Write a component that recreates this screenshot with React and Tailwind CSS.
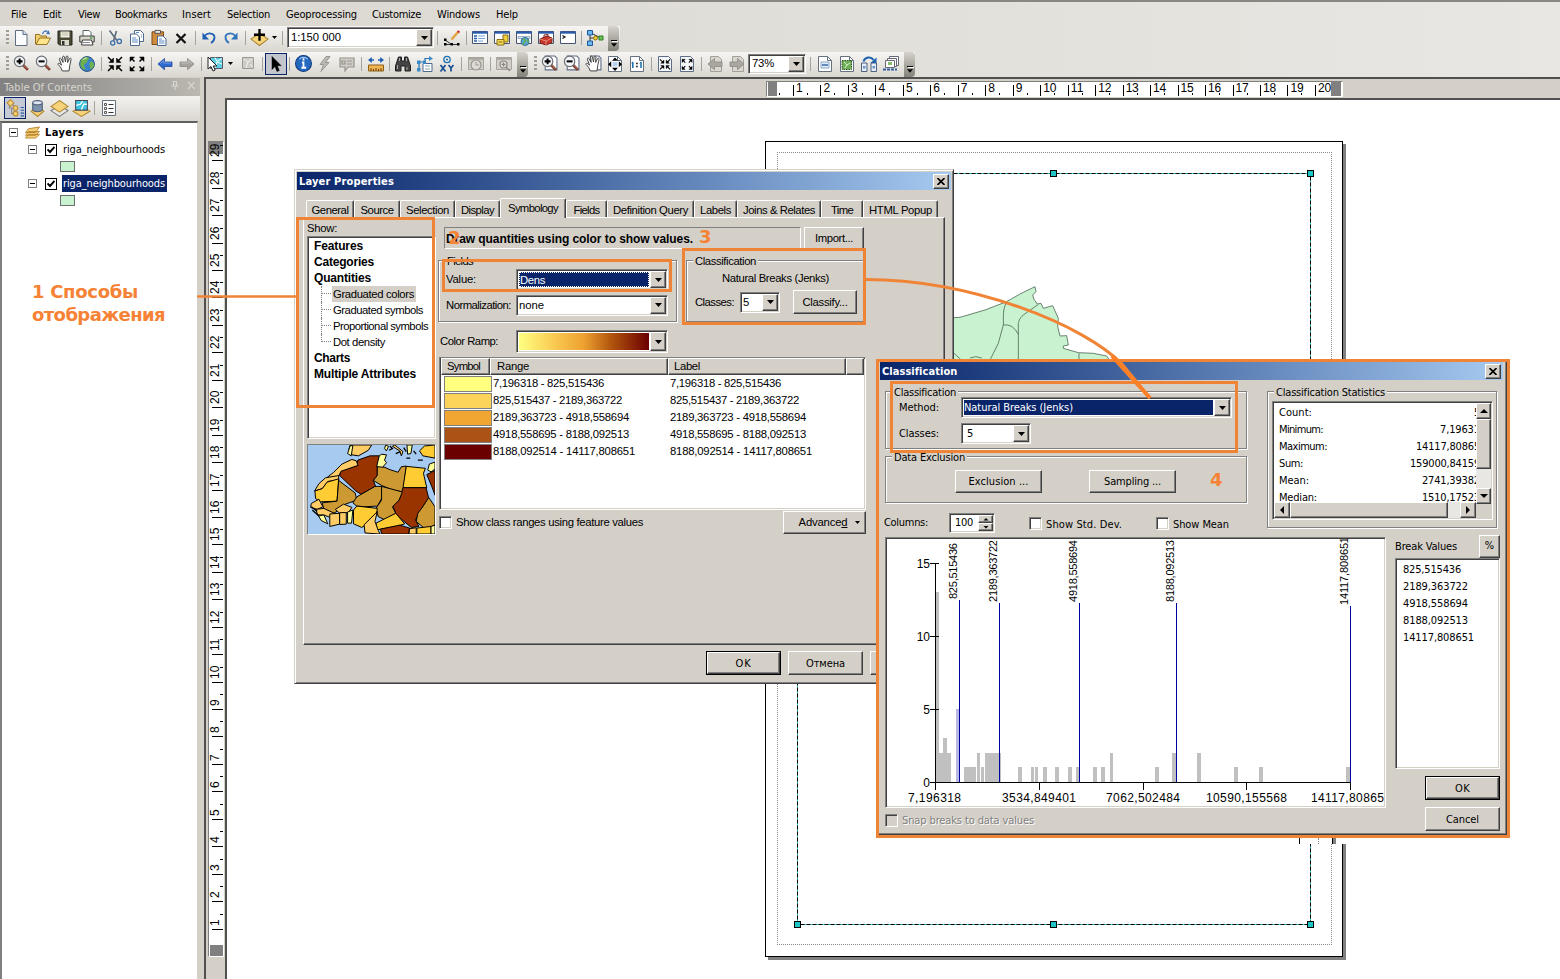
import React, { useLayoutEffect, useRef, useState } from "react";

const TAHOMA = "font-['DejaVu_Sans_Condensed','DejaVu_Sans',sans-serif] text-[11px] [&_span]:pt-[2px]";
const SANS = "font-['Liberation_Sans',sans-serif] text-[12px]";
const SANS11 = "font-['Liberation_Sans',sans-serif] text-[11.300px]";
const RAISED = "border border-t-white border-l-white border-r-[#404040] border-b-[#404040] shadow-[inset_-1px_-1px_0_#808080] bg-[#d4d0c8]";
const EDGE = "border border-t-[#808080] border-l-[#808080] border-r-white border-b-white shadow-[inset_1px_1px_0_#404040,inset_-1px_-1px_0_#d4d0c8]";
const SUNKEN = EDGE + " bg-white";

/* Text whose tracking is adjusted so that it fills a given width. */
function Fit({ w, children, className = "" }) {
  const ref = useRef(null);
  const [ls, setLs] = useState(0);
  useLayoutEffect(() => {
    const n = ref.current.textContent.length;
    const cur = ref.current.getBoundingClientRect().width;
    if (w && n > 1) setLs((w - cur) / n);
  }, [w]);
  return (
    <span ref={ref} className={"inline-block whitespace-pre shrink-0 " + className} style={{ letterSpacing: ls + "px" }}>
      {children}
    </span>
  );
}

const V = ({ children, className = "w-4 h-4" }) => (
  <svg viewBox="0 0 16 16" className={"shrink-0 overflow-visible " + className} fill="none">{children}</svg>
);

const Lens = ({ plus, page }) => (
  <V className="w-[17px] h-[17px]">
    {page && <path d="M4 1h9l2 2v11H4z" fill="#fff" stroke="#5c6b86" />}
    <path d="M9.500 9.500l4.500 4.500" stroke="#7a3b2a" strokeWidth="2.600" />
    <path d="M9.500 9l4 4" stroke="#c98b76" strokeWidth=".8" />
    <circle cx="6.200" cy="6" r="4.900" fill="#f3f5f8" stroke="#6c7076" strokeWidth="1.100" />
    <path d={plus ? "M3.400 6h5.600M6.200 3.200v5.600" : "M3.400 6h5.600"} stroke="#000" strokeWidth="1.900" />
  </V>
);
const Hand = ({ page }) => (
  <V className="w-[17px] h-[17px]">
    {page && <path d="M5 1h8l2 2v11H5z" fill="#fff" stroke="#5c6b86" />}
    <path d="M5 15L3.4 11.6 1 8.8c-.3-1 .8-1.5 1.6-.7L4.3 9.6 2.2 4c-.2-1 1-1.5 1.6-.5L5.8 7 5.3 2c0-1.1 1.4-1.3 1.7-.2L8 6.6 8.7 1.6c.2-1 1.6-.9 1.6.2L10 7l1.8-3.6c.5-.9 1.7-.4 1.5.6L12 10l-.7 5z" fill="#fff" stroke="#3d3d3d" strokeWidth=".9" />
  </V>
);
const Four = ({ out, page }) => (
  <V>
    {page && <path d="M1.500 .5h10l3 3v12h-13z" fill="#f4f6fa" stroke="#5c6b86" />}
    <g transform={page ? "translate(2.3 2.6) scale(.72)" : ""} stroke="#000" strokeWidth="1.500" fill="#000">
      {[0, 90, 180, 270].map((r) => (
        <g key={r} transform={"rotate(" + r + " 8 8)"}>
          {out ? <><path d="M1.500 1.500l4 4" /><path d="M1 1h4.500L1 5.500z" strokeWidth=".5" /></> : <><path d="M1 1l4.500 4.500" /><path d="M6.500 6.500h-4.500l4.500-4.500z" strokeWidth=".5" /></>}
        </g>
      ))}
    </g>
  </V>
);
const Arrow = ({ right, c = "#2e6bd0", s = "#1c4798", page }) => (
  <V>
    {page && <path d="M3.500 .5h8l3 3v12h-11z" fill="#dad7d0" stroke="#a3a09a" />}
    <g transform={right ? "translate(16 0) scale(-1 1)" : ""}>
      <path d="M1 8l6.500-5.500V6H15v4.500H7.500v3.200z" fill={c} stroke={s} strokeWidth=".8" />
      {!page && <path d="M3 7.700l3.800-3V7H14" stroke="#fff" strokeOpacity=".5" strokeWidth=".7" />}
    </g>
  </V>
);
const Win = ({ children, c = "#2a5cae", b = "#fff" }) => (
  <V>
    <path d="M.5 1.500h15v12H.5z" fill={b} stroke={c === "#2a5cae" ? "#44536e" : c} />
    <path d="M.5 1.500h15v2.200H.5z" fill={c} />
    {children}
  </V>
);
const Page = ({ children, s = "#66707f", f = "#fff" }) => (
  <V>
    <path d="M1.500 .5h9l4 4v11h-13z" fill={f} stroke={s} />
    <path d="M10.500 .5v4h4" stroke={s} />
    {children}
  </V>
);

const ICONS = {
  doc: <V><path d="M2.500 .5h7.500l4 4v11h-11.500z" fill="#fbfcfe" stroke="#5f6d80" /><path d="M10 .5v4h4" fill="#cfdcf0" stroke="#5f6d80" /></V>,
  open: <V><path d="M.5 14V4.500h4l1 1.500h6v3" fill="#f1cf6d" stroke="#957320" /><path d="M1 14.500L4.500 8h11L12 14.500z" fill="#ffe48d" stroke="#957320" /><path d="M7.500 4c1-3 3-3.500 5-2.500" stroke="#3c70b4" strokeWidth="1.300" /><path d="M11 4l4 .2L13.500 .2z" fill="#3c70b4" /></V>,
  save: <V><path d="M1 1h14v14H2.500L1 13.500z" fill="#4a4a32" stroke="#22221a" /><path d="M3.500 1.500h9v6h-9z" fill="#f4f3ea" /><path d="M4 10h8v5H4z" fill="#dcdccc" /><path d="M5 11h2.500v4H5z" fill="#33332a" /><path d="M4.500 3h7M4.500 5h7" stroke="#b8b89a" /></V>,
  print: <V><path d="M4 6V.5h6l2 2V6" fill="#fff" stroke="#566" /><path d="M.8 6h14.400v6H.8z" fill="#d8d6ca" stroke="#3c3c3c" /><path d="M3.500 10h9l1.500 5H2.500z" fill="#fff" stroke="#3c3c3c" /><path d="M4 12.500h7" stroke="#888" /><path d="M11 8h2.500" stroke="#3aa040" strokeWidth="1.400" /></V>,
  cut: <V><path d="M2.500 .5l7.500 10M9.500 1L6.500 11" stroke="#5c6b7c" strokeWidth="1.600" /><circle cx="5.700" cy="13" r="2.100" stroke="#3b6ea8" strokeWidth="1.300" /><circle cx="12.300" cy="11.300" r="2.200" stroke="#3b6ea8" strokeWidth="1.300" /></V>,
  copy: <V><path d="M5.500 .5h6l3 3v8h-9z" fill="#fff" stroke="#4c688e" /><path d="M1.500 4h6l3 3v8.500h-9z" fill="#fff" stroke="#4c688e" /><path d="M3 8h4M3 10h6M3 12h6M12 5h1M12 7h1M7 2.500h3" stroke="#5e8cc6" /></V>,
  paste: <V><path d="M1 1.800h11.500v12.700H1z" fill="#cf8c3d" stroke="#7c4b17" /><path d="M4 .4h5.500v3H4z" fill="#e6e6e6" stroke="#555" /><path d="M6.500 6h5.500l3 3v6.500H6.500z" fill="#fff" stroke="#4c688e" /><path d="M8 9h3M8 11h5.500M8 13h5.500" stroke="#5e8cc6" /></V>,
  del: <V><path d="M3.500 4L12.500 13M12.500 4L3.500 13" stroke="#111" strokeWidth="2.200" /></V>,
  undo: <V><path d="M3.500 6c3.500-4 10-3 10 1.200 0 2.500-1.500 4.500-3.500 5.800" stroke="#1f5fb0" strokeWidth="1.800" /><path d="M1.500 2.500v7H8z" fill="#1f5fb0" /></V>,
  redo: <V><g transform="translate(16 0) scale(-1 1)"><path d="M3.500 6c3.500-4 10-3 10 1.200 0 2.500-1.500 4.500-3.500 5.800" stroke="#2f74b8" strokeWidth="1.800" /><path d="M1.500 2.500v7H8z" fill="#2f74b8" /></g></V>,
  add: <V className="w-[17px] h-[17px]"><path d="M8 4l8 5.500-8 6-8-6z" fill="#f6d578" stroke="#a78436" /><path d="M8 0v11M2.800 5.400h10.400" stroke="#000" strokeWidth="2.200" /></V>,
  edit: <V><path d="M1 10l6 4M1 14.500h13M8 9L15 1" stroke="#333" strokeWidth="1" /><path d="M7.500 9.500L14.500 1.500" stroke="#e4a445" strokeWidth="2.600" /><path d="M13.500 1l2 1.500" stroke="#c33" strokeWidth="2" /><path d="M0 8.500h2.500V11H0zM0 13h2.500v2.500H0zM6.500 13H9v2.500H6.500zM13 13h2.500v2.500H13z" fill="#000" /></V>,
  toc: <Win><path d="M2 6h3M2 8.500h3M2 11h3" stroke="#1f5fb0" strokeWidth="1.300" /><path d="M6 6h7M6 8.500h7M6 11h5" stroke="#7ba4dc" strokeWidth="1.200" /></Win>,
  catalog: <Win><path d="M9 5h5v7H9z" fill="#f0d03c" stroke="#8a6d10" /><path d="M3 9.500h7V15H3z" fill="#f4dc5a" stroke="#8a6d10" /><path d="M4.500 12h4" stroke="#8a6d10" /></Win>,
  search: <Win><path d="M2 6.500h12v2H2z" fill="#dfe7f3" stroke="#7d8fae" strokeWidth=".7" /><circle cx="9" cy="11.500" r="4" fill="#56a5d8" stroke="#2f6f90" /><path d="M7 9.500c2-1 3 1 2 2s-2 2-2 3M11 10l1.500 2" stroke="#69b04a" strokeWidth="1.500" /></Win>,
  toolbox: <Win><path d="M2 9l7-3 5 2v4.500L8 15l-6-2z" fill="#c8392c" stroke="#7e1e16" /><path d="M2 9l6 2 6-3M8 11v4" stroke="#f0a090" strokeWidth=".8" /><path d="M6 7V5l4-.5V7" stroke="#7e1e16" /></Win>,
  python: <Win><path d="M2.500 5.500L5 7 2.500 8.500" stroke="#111" strokeWidth="1.200" /></Win>,
  model: <V><path d="M3 3v10M3 8h6M4 3l8 4" stroke="#333" /><path d="M.5 .5h5v4.500h-5z" fill="#6db6f0" stroke="#1c5a9c" /><path d="M.5 11h5v4.500h-5z" fill="#6db6f0" stroke="#1c5a9c" /><circle cx="8.500" cy="8" r="2" fill="#f2d12f" stroke="#8a7010" /><path d="M12 6h4v4h-4z" fill="#70c35a" stroke="#2a7a20" /></V>,
  zin: <Lens plus />, zout: <Lens />, hand: <Hand />,
  globe: <V><circle cx="8" cy="8" r="7.400" fill="#3b83cb" stroke="#27507e" /><path d="M3 3c3-3 6-2 7-1 0 2-2 2-2 4s-3 1-3 3 2 3 1 5C1 12 0 7 3 3zM11 6c3-1 4 1 4 3s-2 4-3 4-2-5-1-7z" fill="#6fb04e" /><path d="M4 4c1-1.500 3-2 4-2" stroke="#fff" strokeOpacity=".7" /></V>,
  inn: <Four />, out: <Four out />, back: <Arrow />, fwd: <Arrow right c="#a5a29c" s="#8b8882" />,
  sel: <V><path d="M3.500 1.500h12v11h-12z" fill="#5fd0e4" stroke="#556" /><path d="M8 1.500l2 4 5-3M15 8l-5-2-2 6" stroke="#fff" /><path d="M1 1v12l3-2.500L6 15l2.200-1L6.200 10H10z" fill="#fff" stroke="#222" /></V>,
  clear: <V><path d="M2.500 1.500h11v11h-11z" fill="#cfccc5" stroke="#9d9a94" /><path d="M4 3l4 3 4-3M8 6l-2 6M10 8l3 3" stroke="#f3f2ef" /></V>,
  ptr: <V><path d="M4 .5v13l3-3 2 5 2.300-1L9.200 9.700h4z" fill="#000" stroke="#000" strokeWidth=".5" /></V>,
  info: <V className="w-[17px] h-[17px]"><circle cx="8" cy="8" r="7.500" fill="#2568c0" stroke="#123c78" /><path d="M4 4c2-2.500 6-2.500 8 0" stroke="#a8c8f0" /><path d="M8 3v2.200M6.500 7H8v5M6 12h4.500" stroke="#fff" strokeWidth="1.700" /></V>,
  bolt: <V><path d="M9 .5L3 8.500h3.500L4 15.500l8-9H8.500l4.500-6z" fill="#bdbab4" stroke="#9a9791" /></V>,
  html: <V><path d="M1 2h14v9H9l-3 4v-4H1z" fill="#d0cdc6" stroke="#96938d" strokeWidth="1.200" /><path d="M3 5h3v3H3zM8 5h5M8 8h5" stroke="#96938d" strokeWidth="1.200" /></V>,
  measure: <V><path d="M.5 9h15v6H.5z" fill="#f0b552" stroke="#8f5f17" /><path d="M3 12v3M5.500 13v2M8 12v3M10.500 13v2M13 12v3" stroke="#6a4308" /><path d="M1 4h5M10 4h5" stroke="#1f5fb0" strokeWidth="1.500" /><path d="M3.800 1v6L0 4zM12.200 1v6L16 4z" fill="#1f5fb0" /></V>,
  find: <V><path d="M3.500 1h3v4H9.500V1h3l3 9v5H10v-5H6v5H.5v-5z" fill="#444" stroke="#1e1e1e" /><path d="M4.500 2v3M2.500 9v4M11.500 2v3M12 11v3" stroke="#aaa" /></V>,
  route: <V><path d="M6 7.500h9v8H6z" fill="#fff" stroke="#4c688e" /><path d="M8 10h5M8 13h5" stroke="#8aa" /><path d="M2 14V6h6V2.500h5" stroke="#1f73b4" strokeWidth="1.200" /><path d="M12 0l4 2.500-4 2.500zM0 4.500h3.500V8H0zM0 12h3.500v3.500H0zM6 4.500h3V8H6z" fill="#3a8ac8" /></V>,
  xy: <V><circle cx="8" cy="3.500" r="3.200" stroke="#1f73b4" strokeWidth="1.300" /><circle cx="8" cy="3.500" r="1.100" fill="#1f73b4" /><path d="M1.500 9l5 6.500M6.500 9l-5 6.500M9.500 9l2.500 3 2.500-3M12 12v3.500" stroke="#174f92" strokeWidth="1.700" /></V>,
  time: <Win c="#a8a59f" b="#d2cfc8"><circle cx="8" cy="9" r="5" fill="#dddad4" stroke="#9a9791" strokeWidth="1.200" /><path d="M8 6v3h3" stroke="#9a9791" /></Win>,
  viewer: <Win c="#a8a59f" b="#d2cfc8"><circle cx="7.500" cy="8.500" r="3.500" fill="#e4e2dd" stroke="#8a8781" strokeWidth="1.200" /><path d="M5.500 8.500h4M7.500 6.500v4M10 11l4 4" stroke="#8a8781" strokeWidth="1.300" /></Win>,
  pzin: <Lens plus page />, pzout: <Lens page />, phand: <Hand page />,
  pfull: <Page><path d="M8 1.500l3 3.200H5zM8 15l3-3.200H5zM1 8.300l3.200-3v6zM15 8.300l-3.200-3v6z" fill="#000" /><path d="M5.500 6h5v4.500h-5z" fill="#b9d3ef" /></Page>,
  p11: <Page><path d="M3.800 6v6M12 6v6" stroke="#1f73b4" strokeWidth="1.600" /><path d="M2.500 7.200L3.800 6M10.700 7.200L12 6" stroke="#1f73b4" /><path d="M7.200 7.500h1.500M7.200 10.500h1.500" stroke="#000" strokeWidth="1.500" /></Page>,
  pin: <Four page />, pout: <Four page out />,
  pback: <Arrow page c="#aaa7a1" s="#8b8882" />, pfwd: <Arrow page right c="#aaa7a1" s="#8b8882" />,
  draft: <Page><path d="M4 6h8v6H4z" fill="#e0ebf8" stroke="#8aa6cc" /><path d="M5 9h6" stroke="#2f5f9f" strokeWidth="1.400" /></Page>,
  focus: <Page><path d="M3 4.500h9.500v9H3z" fill="#6eb057" stroke="#2d4d22" strokeDasharray="1.500 1" /><path d="M5 6l3 3 3-2M6 12l2-3" stroke="#d7efc8" /></Page>,
  change: <V><path d="M.5 7h5.500v8.500H.5zM10 7h5.500v8.500H10z" fill="#e7eef8" stroke="#4c5f7e" /><path d="M2 10h2.500v2.500H2zM11.500 10H14v2.500h-2.500z" fill="#6b93c4" /><path d="M2.500 5.500C4 1 10 0 12.500 4" stroke="#1f62ac" strokeWidth="2" /><path d="M15.500 1.500v5.500H9.500z" fill="#1f62ac" /></V>,
  ddp: <V><path d="M6.500 .5h9v9h-9z" fill="#fff" stroke="#667" /><path d="M4.500 2.500h9v8h-9z" fill="#fff" stroke="#667" /><path d="M2.500 4.500h9v7h-9z" fill="#fff" stroke="#667" /><path d="M5 6h4v3H5z" fill="#83bd6b" /><path d="M0 13.500h14" stroke="#2f5f9f" strokeWidth="2.200" strokeDasharray="3 1" /></V>,
  t1: <V className="w-[18px] h-[18px]"><path d="M3 4v4h5M5 4l3 3M5 8v5h3" stroke="#8d8a83" /><path d="M4 .5l3 3-3 3-3-3z" fill="#f6d27a" stroke="#b98d35" /><circle cx="8.500" cy="8" r="2" fill="#f6d27a" stroke="#b98d35" /><circle cx="8.500" cy="13" r="2" fill="#f6d27a" stroke="#b98d35" /><path d="M13 7.500h3M13 10h3M13 12.500h3M13 15h3" stroke="#2f5f9f" /></V>,
  t2: <V className="w-[17px] h-[17px]"><path d="M8 6l6 4.500-6 5-6-5z" fill="#f4cf74" stroke="#b28934" /><path d="M3.500 2.500v7c1.500 2 7.500 2 9 0v-7" fill="#7d93ad" stroke="#4f6076" /><ellipse cx="8" cy="2.500" rx="4.500" ry="1.900" fill="#dfe7f0" stroke="#4f6076" /></V>,
  t3: <V className="w-[17px] h-[17px]"><path d="M8 5l8 5-8 5.500L0 10z" fill="#e8e8e8" stroke="#777" /><path d="M8 .5l8 5.500-8 5.500L0 6z" fill="#f6d27a" stroke="#b28934" /></V>,
  t4: <V className="w-[17px] h-[17px]"><path d="M8 6l8 4.500-8 5-8-5z" fill="#f6d27a" stroke="#b28934" /><path d="M2.500 .5h11v9h-11z" fill="#3fc5e0" stroke="#445" /><path d="M3 5l4-1 2-3M8 9l2-5h3" stroke="#fff" strokeWidth="1.200" /></V>,
  t5: <V><path d="M1.500 .5h13v15h-13z" fill="#fbfbfb" stroke="#66707f" /><path d="M3.500 3.500h2v2h-2zM3.500 7.500h2v2h-2zM3.500 11.500h2v2h-2z" stroke="#333" strokeWidth=".8" /><path d="M7.500 4.500h5M7.500 8.500h5M7.500 12.500h5" stroke="#333" /></V>,
};

const Cell = ({ n, className = "w-[22px]" }) => <div className={"flex h-[22px] shrink-0 items-center justify-center " + className}>{ICONS[n]}</div>;
const Cells = ({ list }) => list.split(" ").map((n) => <Cell key={n} n={n} />);
const Sep = ({ className = "w-[6px]" }) => <div className={"flex shrink-0 items-center justify-center " + className}><div className="h-[14px] w-px bg-[#a6a39c]" /></div>;
const Grip = () => <div className="w-[3px] h-[16px] shrink-0 bg-[repeating-linear-gradient(180deg,#a09d97_0_2px,transparent_2px_4px)]" />;
const Down = ({ className = "h-[4px] w-[7px]" }) => <svg viewBox="0 0 7 4" className={"shrink-0 " + className}><path d="M0 0h7L3.500 4z" fill="#000" /></svg>;
const End = () => (
  <div className="-mb-[2px] ml-[2px] flex h-[25px] w-[11px] shrink-0 flex-col items-center justify-end self-start rounded-r-sm bg-linear-to-b from-[#d6d3cc] to-[#858279] pb-[4px]">
    <div className="mb-[2px] h-px w-[6px] bg-black shadow-[1px_1px_0_#fff]" />
    <Down className="h-[4px] w-[6px]" />
  </div>
);
const BAR = "flex h-[25px] items-center bg-linear-to-b from-[#f6f5f3] to-[#dad7d0] pb-[2px]";

function Combo({ children, className, inner = "", btn = "w-[16px]" }) {
  return (
    <div className={"flex shrink-0 p-px " + SUNKEN + " " + className}>
      <div className={"m-px flex min-w-0 flex-1 items-center overflow-hidden " + inner}>{children}</div>
      <div className={"flex shrink-0 items-center justify-center " + RAISED + " " + btn}><Down /></div>
    </div>
  );
}
const Button = ({ children, className = "" }) => <div className={"flex shrink-0 items-center justify-center " + RAISED + " " + className}>{children}</div>;
const OkButton = ({ children, className = "" }) => <div className={"flex shrink-0 border border-black " + className}><Button className="flex-1">{children}</Button></div>;
const Check = ({ className = "", fill = "bg-white" }) => <div className={"h-[13px] w-[13px] shrink-0 " + EDGE + " " + fill + " " + className} />;
const Close = ({ className = "" }) => (
  <Button className={"h-[15px] w-[16px] " + className}>
    <svg viewBox="0 0 8 7" className="h-[7px] w-[8px]"><path d="M.5 0l7 7M7.500 0l-7 7" stroke="#000" strokeWidth="1.600" /></svg>
  </Button>
);
function Group({ title, w, className = "", children }) {
  return (
    <div className={"relative shrink-0 border border-[#808080] shadow-[1px_1px_0_#fff,inset_1px_1px_0_#fff] " + className}>
      <div className="absolute left-[6px] top-[-7px] bg-[#d4d0c8] px-[2px] leading-[15px]"><Fit w={w} className="pt-0!">{title}</Fit></div>
      {children}
    </div>
  );
}

const MENU = [["File", 16, "w-[32px]"], ["Edit", 18, "w-[35px]"], ["View", 22, "w-[37px]"], ["Bookmarks", 52, "w-[67px]"], ["Insert", 29, "w-[45px]"], ["Selection", 43, "w-[59px]"], ["Geoprocessing", 71, "w-[86px]"], ["Customize", 49, "w-[65px]"], ["Windows", 43, "w-[59px]"], ["Help", 22, "w-[30px]"]];

function TopBars() {
  return (
    <div className="h-[77px] shrink-0 border-t-2 border-[#8a8782] bg-linear-to-r from-[#d9d6cf] to-[#e9e7e3]">
      <div className={"flex h-[24px] items-center pl-[11px] " + TAHOMA}>
        {MENU.map(([t, w, c]) => <div key={t} className={c}><Fit w={w}>{t}</Fit></div>)}
      </div>
      <div className={BAR + " w-[620px] pl-[6px]"}>
        <Grip /><div className="w-px" />
        <Cells list="doc open save print" /><Sep /><Cells list="cut copy paste del" /><Sep /><Cells list="undo redo" /><Sep />
        <Cell n="add" /><div className="flex w-[8px] justify-center"><Down className="h-[3px] w-[5px]" /></div><Sep className="w-[9px]" />
        <Combo className={"h-[21px] w-[147px] " + SANS11} inner="pl-px"><Fit w={50}>1:150 000</Fit></Combo>
        <Sep className="w-[7px]" /><Cell n="edit" /><Sep /><Cells list="toc catalog search toolbox python" /><Sep className="w-[5px]" /><Cell n="model" /><End />
      </div>
      <div className="flex h-[26px] items-end">
        <div className={BAR + " w-[915px] pl-[6px]"}>
          <Grip /><div className="w-px" />
          <Cells list="zin zout hand globe" /><Sep /><Cells list="inn out" /><Sep /><Cells list="back fwd" /><Sep />
          <Cell n="sel" /><div className="flex w-[8px] justify-center"><Down className="h-[3px] w-[5px]" /></div><div className="w-[3px]" /><Cell n="clear" /><Sep />
          <Cell n="ptr" className="w-[22px] border border-[#0a246a] bg-[#c3c6cd]" /><Sep className="w-[5px]" />
          <Cells list="info bolt html" /><Sep className="w-[7px]" /><Cell n="measure" /><Sep className="w-[5px]" /><Cells list="find route xy" /><Sep className="w-[7px]" />
          <Cell n="time" /><Sep /><Cell n="viewer" /><End />
          <div className="w-[6px]" /><Grip /><div className="w-px" />
          <Cells list="pzin pzout phand pfull p11" /><Sep /><Cells list="pin pout" /><Sep /><Cells list="pback pfwd" />
          <Combo className={"h-[20px] w-[58px] " + SANS11} inner="pl-px"><Fit w={22}>73%</Fit></Combo>
          <Sep className="w-[8px]" /><Cells list="draft focus change ddp" /><End />
        </div>
      </div>
    </div>
  );
}

const Minus = () => <div className="flex h-[9px] w-[9px] shrink-0 items-center justify-center border border-[#808080] bg-white"><div className="h-px w-[5px] bg-black" /></div>;
function LayerRow({ selected }) {
  return (
    <>
      <div className="flex h-[17px] items-center pl-[26px]">
        <Minus />
        <div className="ml-[8px] flex h-[12px] w-[12px] items-center justify-center border border-black">
          <svg viewBox="0 0 8 8" className="h-2 w-2"><path d="M.5 3.500L3 6 7.500 1" stroke="#000" strokeWidth="1.900" fill="none" /></svg>
        </div>
        <div className={"ml-[5px] flex h-[17px] w-[105px] items-center pl-px " + (selected ? "bg-[#0a246a] text-white" : "")}><Fit w={102}>riga_neighbourhoods</Fit></div>
      </div>
      <div className="flex h-[17px] items-center pl-[58px] pb-px"><div className="h-[11px] w-[15px] border border-[#6e6e6e] bg-[#c8f2d0]" /></div>
    </>
  );
}

function Contents() {
  return (
    <div className={"flex w-[200px] shrink-0 flex-col " + TAHOMA}>
      <div className="flex h-[18px] items-center bg-linear-to-r from-[#818181] to-[#bbb8b1] pl-[4px] text-[#d8d5ce]">
        <Fit w={88}>Table Of Contents</Fit>
        <svg viewBox="0 0 24 9" className="mb-[3px] ml-[79px] h-[9px] w-[24px]"><path d="M2 .5h4M2.500 .5v4M5.500 .5v4M.5 5h7M4 5v4M17 1l6.500 7M23.500 1L17 8" stroke="#d8d5ce" fill="none" strokeWidth="1.200" /></svg>
      </div>
      <div className="flex h-[25px] items-center bg-linear-to-b from-[#f3f2ef] to-[#dad7d0] pl-[4px] pb-px">
        <Cell n="t1" className="w-[22px] border border-[#0a246a] bg-[#c5cad6]" /><Cells list="t2 t3 t4" /><Sep className="w-[5px]" /><Cell n="t5" className="w-[24px]" />
      </div>
      <div className="mr-[2px] flex-1 border-t-2 border-l-2 border-r border-t-[#606060] border-l-[#808080] border-r-[#d4d0c8] bg-white">
        <div className="flex h-[18px] items-center pl-[7px]">
          <Minus />
          <svg viewBox="0 0 17 14" className="ml-[6px] h-[13px] w-[17px]"><path d="M1 13l3-4h12l-4 4zM1 10l3-4h12l-4 4zM1 7l3-4 12-2-4 6z" fill="#f5cf7a" stroke="#b07b22" strokeWidth=".9" /></svg>
          <Fit w={39} className="ml-[4px] font-bold">Layers</Fit>
        </div>
        <LayerRow /><LayerRow selected />
      </div>
    </div>
  );
}

const range = (a, b) => Array.from({ length: b - a + 1 }, (_, i) => a + i);
function HRuler() {
  return (
    <div className={"ml-[560px] mt-[2px] flex h-[16px] w-[577px] overflow-hidden border border-t-[#808080] border-l-[#808080] border-r-white border-b-white bg-white " + SANS}>
      <div className="ml-px h-full w-[9px] shrink-0 bg-[#808080]" />
      <div className="mr-[13px] w-[3px] shrink-0 self-end"><div className="mb-px ml-[2px] h-[2px] w-px bg-black" /></div>
      {range(1, 20).map((n) => (
        <div key={n} className={"flex shrink-0 items-end " + (n === 20 ? "w-[16px]" : "w-[27.480px]")}>
          <div className="h-[11px] w-px shrink-0 bg-black" />
          <div className="w-[13px] shrink-0 self-start pl-[2px] leading-[13px]"><Fit w={n > 9 ? 13 : 7}>{n}</Fit></div>
          <div className={"mb-px h-[2px] w-px shrink-0 " + (n === 20 ? "" : "bg-black")} />
        </div>
      ))}
      <div className="h-full w-[10px] shrink-0 bg-[#808080]" />
    </div>
  );
}
function VRuler() {
  return (
    <div className={"mx-[2px] mt-[43px] flex h-[816px] w-[16px] flex-col-reverse overflow-hidden border border-t-[#808080] border-l-[#808080] border-r-white border-b-white bg-white " + SANS}>
      <div className="ml-px h-[11px] w-[14px] shrink-0 bg-[#808080]" />
      <div className="h-[15.500px] shrink-0" />
      {range(1, 29).map((n) => (
        <div key={n} className={"flex h-[27.450px] shrink-0 flex-col justify-end " + (n === 29 ? "bg-[linear-gradient(180deg,#808080_20px,transparent_20px)]" : "")}>
          <div className="-mb-px ml-[11px] h-px w-[3px] bg-black" />
          <div className="mb-[3px] flex h-[12px] w-[12px] rotate-180 items-start leading-[12px] [writing-mode:vertical-rl]"><span>{n}</span></div>
          <div className="ml-[3px] h-px w-[11px] bg-black" />
        </div>
      ))}
    </div>
  );
}

const Handle = ({ className }) => <div className={"absolute h-[7px] w-[7px] border border-black bg-[#1fc4c4] " + className} />;
function MapCanvas() {
  return (
    <div className="relative flex-1 overflow-hidden border-t-2 border-l-2 border-[#505050] bg-white">
      <div className="absolute left-[538px] top-[41px] h-[816px] w-[578px] border border-black bg-white shadow-[3px_3px_0_#808080]" />
      <div className="absolute left-[550px] top-[52px] h-[793px] w-[555px] border border-dotted border-[#8a8a8a]" />
      <svg viewBox="797 173 514 752" className="absolute left-[570px] top-[73px] h-[752px] w-[514px]" fill="none">
        <rect x="797.500" y="173.500" width="513" height="751" stroke="#3cc8c8" />
        <rect x="797.500" y="173.500" width="513" height="751" stroke="#000" strokeDasharray="4 2" />
        <g transform="translate(930 70) scale(.33333)" stroke="#55705c" strokeWidth="2.600">
          <path d="M-20 755L72 743 90 742 165 720 230 695 270 672 315 650 318 665 308 675 312 688 322 702 333 700 340 715 368 707 385 745 383 770 390 798 410 797 415 825 400 828 400 835 445 848 490 850 530 858 545 880 72 880z" fill="#c8f2d0" />
          <path d="M230 695C215 725 222 750 220 765L205 820 180 870M220 765Q248 760 265 793M325 703L280 735C268 745 265 755 265 765V868M447 850v18M72 850L92 868M120 864Q137 856 155 864" />
        </g>
      </svg>
      <Handle className="left-[823px] top-[70px]" /><Handle className="left-[1080px] top-[70px]" />
      <Handle className="left-[567px] top-[821px]" /><Handle className="left-[823px] top-[821px]" /><Handle className="left-[1080px] top-[821px]" />
      <div className="absolute left-[1040px] top-[738px] h-[6px] w-[90px] bg-white">
        <div className="flex h-full">
          <div className="ml-[32px] w-px bg-black" /><div className="ml-[18px] w-px border-l border-dotted border-[#8a8a8a]" /><div className="ml-[13px] w-px bg-black" /><div className="w-[3px] bg-[#808080]" />
        </div>
      </div>
    </div>
  );
}

const LAND = [
  ["#ffcc66", "185,162 176,145 180,132 245,132 235,148 205,165"], ["#ffff99", "172,158 180,134 188,134 183,165"],
  ["#993300", "203,178 240,165 268,165 262,200 262,225 250,240 257,258 213,282 197,272 148,225 150,210 200,195"],
  ["#ffff99", "268,165 275,160 290,162 284,178 290,186 276,202 260,198"],
  ["#ffcc66", "198,180 204,194 152,212 145,227 105,235 130,215 155,190 185,176"],
  ["#ffcc66", "105,232 145,225 145,238 112,243 95,265 72,272 85,250"],
  ["#ffcc33", "73,272 95,265 110,245 145,235 140,303 90,305 75,295"],
  ["#cc9933", "145,240 195,278 200,300 165,312 155,325 130,340 100,328 95,308 140,303"],
  ["#cc9933", "200,290 255,258 275,258 278,290 262,318 225,320 200,318 188,308"],
  ["#cc9933", "262,198 285,200 300,207 325,215 335,198 350,196 340,275 310,270 275,255 250,240 262,225"],
  ["#ffcc33", "350,197 408,203 402,218 412,262 340,262"],
  ["#993300", "340,262 410,262 418,295 400,320 378,360 388,380 365,383 320,345 308,315 328,300"],
  ["#cc9933", "275,258 338,275 328,300 308,320 318,340 285,360 265,350 258,325 275,300"],
  ["#ffcc33", "190,330 200,318 262,325 260,342 235,370 215,383 190,372"],
  ["#ffcc33", "258,370 318,340 345,372 320,380 262,390"],
  ["#ffcc66", "262,335 255,365 265,392 270,403 225,400 222,375"],
  ["#cc9933", "418,292 437,320 437,375 410,390 380,365 385,340 400,320"],
  ["#993300", "272,388 330,376 360,385 357,403 275,403"], ["#ffcc66", "360,387 380,384 380,403 358,403"],
  ["#ffcc33", "382,385 425,380 425,403 382,403"], ["#ffff99", "425,380 437,376 437,403 425,403"],
  ["#ffcc66", "62,310 85,297 97,320 80,328 60,322"], ["#ffcc66", "75,328 100,325 132,340 118,352 100,345 82,345"],
  ["#ffff99", "84,348 100,345 112,372 92,362"], ["#ffcc66", "118,342 148,340 148,373 118,380"],
  ["#ffcc66", "135,328 160,312 185,322 175,338 148,340"], ["#ffcc66", "148,338 168,338 168,373 148,374"], ["#ffff99", "172,336 188,330 184,370 172,370"],
  ["#ffcc33", "390,150 405,135 437,132 437,172 400,165"], ["#ffff99", "415,208 420,190 437,184 437,205 425,214"],
  ["#993300", "412,222 437,210 437,285 428,260"], ["#ffff99", "288,132 296,136 290,150 284,142"], ["#ffcc66", "315,132 340,152 335,165 330,150 308,136"], ["#ffff99", "352,132 368,132 364,158 354,160"],
];
const TABS = [["General", 37, "w-[48px]"], ["Source", 33, "w-[46px]"], ["Selection", 43, "w-[55px]"], ["Display", 33, "w-[45px]"], ["Symbology", 50, "w-[66px]"], ["Fields", 26, "w-[41px]"], ["Definition Query", 75, "w-[87px]"], ["Labels", 31, "w-[43px]"], ["Joins & Relates", 72, "w-[84px]"], ["Time", 22, "w-[42px]"], ["HTML Popup", 63, "w-[75px]"]];
const SHOW = [["Features", 49], ["Categories", 60], ["Quantities", 57], ["Graduated colors", 81, 1], ["Graduated symbols", 90, 1], ["Proportional symbols", 95, 1], ["Dot density", 52, 1], ["Charts", 36], ["Multiple Attributes", 102]];
const CLASSES = [["bg-[#ffff80]", "7,196318 - 825,515436", 111], ["bg-[#fcd45a]", "825,515437 - 2189,363722", 129], ["bg-[#f0a630]", "2189,363723 - 4918,558694", 136], ["bg-[#ab5316]", "4918,558695 - 8188,092513", 136], ["bg-[#6b0000]", "8188,092514 - 14117,808651", 142]];
const TITLE = "flex h-[18px] shrink-0 items-center justify-between bg-linear-to-r from-[#0a246a] to-[#a6caf0] pl-[2px] pr-[2px] font-bold text-white " + TAHOMA;

function LayerProperties() {
  return (
    <div className={"absolute left-[294px] top-[169px] flex h-[515px] w-[660px] flex-col border border-t-[#d4d0c8] border-l-[#d4d0c8] border-r-[#404040] border-b-[#404040] bg-[#d4d0c8] p-[2px] shadow-[inset_1px_1px_0_#fff,inset_-1px_-1px_0_#808080] " + SANS11}>
      <div className={TITLE}><Fit w={95}>Layer Properties</Fit><Close /></div>
      <div className="flex h-[27px] shrink-0 items-end pl-[9px]">
        {TABS.map(([t, w, c]) => {
          const on = t === "Symbology";
          return (
            <div key={t} className={"flex justify-center rounded-t-[2px] border border-b-0 border-t-white border-l-white border-r-[#404040] bg-[#d4d0c8] shadow-[inset_-1px_0_0_#808080] " + c + (on ? " relative z-10 -mb-px h-[20px] pt-[2px] leading-[14px]" : " h-[17px] pt-[2px] leading-[15px]")}>
              <Fit w={w}>{t}</Fit>
            </div>
          );
        })}
      </div>
      <div className="mx-[6px] flex h-[428px] w-[642px] shrink-0 border border-t-white border-l-white border-r-[#404040] border-b-[#404040] shadow-[inset_-1px_-1px_0_#808080]">
        <div className="flex w-[132px] shrink-0 flex-col pl-[3px]">
          <div className="flex h-[18px] items-center pt-[2px]"><Fit w={30}>Show:</Fit></div>
          <div className={"h-[203px] w-[129px] " + SUNKEN}>
            <div className="pt-px">
              {SHOW.map(([t, w, sub], i) => (
                <div key={t} className={"flex h-[16px] items-center " + (sub ? "pl-[13px]" : "pl-[5px] text-[12px] font-bold")}>
                  {sub && <div className={"mr-[2px] w-[9px] border-l border-dotted border-[#808080] " + (t === "Dot density" ? "mb-[8px] h-[8px]" : "h-[16px]")}><div className="h-[8px] w-[9px] border-b border-dotted border-[#808080]" /></div>}
                  <div className={"flex h-[16px] items-center px-px " + (i === 3 ? "bg-[#d4d0c8] pr-[2px]" : "")}><Fit w={w}>{t}</Fit></div>
                </div>
              ))}
            </div>
          </div>
          <svg viewBox="52 132 385 271" preserveAspectRatio="none" className="mt-[5px] h-[91px] w-[129px] border border-t-[#808080] border-l-[#808080] border-r-white border-b-white bg-[#a6caf0]">
            {LAND.map(([c, p]) => <polygon key={p} points={p} fill={c} stroke="#000" strokeWidth="3" />)}
            <path d="M300 135l8 8-10 5M318 158l14-6M350 172h12M385 178h15M62 320l18 14M65 330l20 18M342 140l8 12M372 150l8 10" stroke="#000" strokeWidth="4" fill="none" />
          </svg>
        </div>
        <div className="ml-[3px] flex w-[430px] flex-col pt-[9px]">
          <div className="flex h-[23px] pl-[5px]">
            <div className="flex h-[22px] w-[357px] items-center border border-t-[#808080] border-l-[#808080] border-r-white border-b-white pl-px pt-[2px] text-[12px] font-bold"><Fit w={247}>Draw quantities using color to show values.</Fit></div>
            <Button className="ml-[3px] h-[23px] w-[60px]"><Fit w={38}>Import...</Fit></Button>
          </div>
          <div className="-ml-px mt-[10px] flex">
            <Group title="Fields" w={26} className="h-[62px] w-[239px] pl-[7px] pt-[8px]">
              <div className="flex h-[21px] items-center"><div className="w-[70px]"><Fit w={30}>Value:</Fit></div>
                <Combo className="h-[21px] w-[152px]" inner="bg-[#0a246a] outline-1 -outline-offset-1 outline-dotted outline-white pl-px pt-px text-white"><Fit w={25}>Dens</Fit></Combo></div>
              <div className="mt-[4px] flex h-[22px] items-center"><div className="w-[70px]"><Fit w={65}>Normalization:</Fit></div>
                <Combo className="h-[21px] w-[152px]" inner="pt-px"><Fit w={25}>none</Fit></Combo></div>
            </Group>
            <Group title="Classification" w={61} className="ml-[9px] h-[62px] w-[179px] pl-[8px] pt-[9px]">
              <div className="flex h-[16px] items-center pl-[27px]"><Fit w={107}>Natural Breaks (Jenks)</Fit></div>
              <div className="mt-[4px] flex h-[24px] items-center"><div className="w-[45px]"><Fit w={39}>Classes:</Fit></div>
                <Combo className="h-[21px] w-[40px]" inner="">5</Combo>
                <Button className="ml-[13px] h-[24px] w-[64px]"><Fit w={45}>Classify...</Fit></Button></div>
            </Group>
          </div>
          <div className="mt-[8px] flex h-[23px] items-center pl-px"><div className="w-[76px]"><Fit w={58}>Color Ramp:</Fit></div>
            <Combo className="h-[23px] w-[152px]" inner="bg-[linear-gradient(90deg,#ffff80_0%,#f9c850_28%,#eda030_50%,#b4580f_70%,#6b0000_100%)]"><span /></Combo></div>
          <div className={"mt-[4px] flex h-[153px] w-[427px] flex-col px-px " + SUNKEN}>
            <div className="flex h-[17px] shrink-0">
              <div className={"w-[49px] pl-[5px] leading-[15px] " + RAISED}><Fit w={33}>Symbol</Fit></div>
              <div className={"w-[178px] pl-[6px] leading-[15px] " + RAISED}><Fit w={32}>Range</Fit></div>
              <div className={"w-[178px] pl-[5px] leading-[15px] " + RAISED}><Fit w={26}>Label</Fit></div>
              <div className={"flex-1 " + RAISED} />
            </div>
            {CLASSES.map(([c, t, w]) => (
              <div key={t} className="flex h-[17px] shrink-0 items-center pl-[3px]">
                <div className={"h-[16px] w-[48px] border border-[#808080] " + c} />
                <div className="w-[178px] pl-px"><Fit w={w}>{t}</Fit></div>
                <Fit w={w}>{t}</Fit>
              </div>
            ))}
          </div>
          <div className="mt-px flex h-[23px] items-center">
            <Check /><Fit w={187} className="ml-[4px]">Show class ranges using feature values</Fit>
            <Button className="ml-auto mr-[3px] h-[23px] w-[83px] pl-[10px]"><Fit w={49}>Advance<u>d</u></Fit><Down className="ml-[8px] h-[3px] w-[5px]" /></Button>
          </div>
        </div>
      </div>
      <div className={"flex pl-[409px] pt-[6px] " + TAHOMA}>
        <OkButton className="h-[24px] w-[75px]"><Fit w={16}>OK</Fit></OkButton>
        <Button className="ml-[7px] h-[24px] w-[75px]"><Fit w={39}>Отмена</Fit></Button>
        <Button className="ml-[7px] h-[24px] w-[75px]"><span /></Button>
      </div>
    </div>
  );
}

const BARS = [[935, 4, 13], [939, 4, 2], [943, 4, 3], [947, 4, 2], [956, 3, 5], [964, 12, 1], [977, 3, 2], [981, 3, 1], [985, 16, 2], [1018, 4, 1], [1031, 3, 1], [1035, 3, 1], [1043, 4, 1], [1055, 4, 1], [1068, 4, 1], [1076, 4, 1], [1093, 4, 1], [1101, 4, 1], [1110, 3, 2], [1155, 4, 1], [1172, 4, 2], [1197, 4, 2], [1234, 4, 1], [1259, 4, 1], [1346, 4, 1]];
const BREAKS = [[959, 600, "825,515436", 56, 599], [999, 603, "2189,363722", 62, 602], [1079, 603, "4918,558694", 62, 602], [1176, 603, "8188,092513", 62, 602], [1350, 606, "14117,808651", 68, 605]];
const XLAB = [[935, 908, "7,196318", 53], [1039, 1002, "3534,849401", 74], [1143, 1106, "7062,502484", 74], [1246, 1206, "10590,155568", 81], [1350, 1311, "14117,808651", 80]];

function Histogram() {
  return (
    <svg viewBox="887 539 497 267" className="block h-[267px] w-[497px] font-['Liberation_Sans',sans-serif]">
      {BARS.map(([x, w, v]) => <rect key={x} x={x} y={Math.round(782 - v * 14.6)} width={w} height={Math.round(v * 14.6)} fill={v === 5 ? "#b9b9e4" : "#c0c0c0"} />)}
      {BREAKS.map(([x, y, t, w, b]) => (
        <g key={x}>
          <rect x={x} y={y} width="1" height={782 - y} fill="#0000a0" />
          <text transform={`translate(${x - 2.5} ${b}) rotate(-90)`} fontSize="11" textLength={w} lengthAdjust="spacing">{t}</text>
        </g>
      ))}
      <path d="M935.500 563V782.500H1351" stroke="#000" fill="none" />
      {[15, 10, 5, 0].map((v) => (
        <g key={v}>
          <path d={`M930 ${Math.round(782 - v * 14.6) + 0.5}h9`} stroke="#000" />
          <text x="930" y={Math.round(782 - v * 14.6) + 5} fontSize="12" textAnchor="end">{v}</text>
        </g>
      ))}
      {XLAB.map(([x, l, t, w]) => (
        <g key={x}>
          <path d={`M${x + 0.5} 782v8`} stroke="#000" />
          <text x={l} y="802" fontSize="12" textLength={w} lengthAdjust="spacing">{t}</text>
        </g>
      ))}
    </svg>
  );
}

const STATS = [["Count:", 33, "58", 12, "ml-[162px]"], ["Minimum:", 44, "7,196318", 46, "ml-[117px]"], ["Maximum:", 48, "14117,80865", 64, "ml-[89px]"], ["Sum:", 24, "159000,84159", 70, "ml-[107px]"], ["Mean:", 30, "2741,393820", 64, "ml-[113px]"], ["Median:", 38, "1510,175231", 64, "ml-[105px]"]];
const Tri = ({ d }) => <svg viewBox="0 0 8 8" className="h-2 w-2 shrink-0"><path d={d} fill="#000" /></svg>;

function ClassificationDialog() {
  return (
    <div className={"absolute left-[876px] top-[359px] h-[479px] w-[634px] border-3 border-[#f08436] " + TAHOMA}>
      <div className="flex h-full flex-col border-r border-b border-[#404040] bg-[#d4d0c8] px-px shadow-[inset_-1px_-1px_0_#808080]">
        <div className={TITLE + " mr-[2px]"}><Fit w={75}>Classification</Fit><Close /></div>
        <div className="flex h-[152px] shrink-0">
          <div className="w-[363px] shrink-0 pl-[5px]">
            <Group title="Classification" w={62} className="mt-[11px] h-[58px] w-[362px] pl-[13px] pt-[5px]">
              <div className="flex h-[21px] items-center"><div className="w-[62px]"><Fit w={40}>Method:</Fit></div>
                <Combo className="h-[21px] w-[271px]" inner="bg-[#0a246a] text-white"><Fit w={109}>Natural Breaks (Jenks)</Fit></Combo></div>
              <div className="mt-[5px] flex h-[21px] items-center"><div className="w-[62px]"><Fit w={40}>Classes:</Fit></div>
                <Combo className="h-[21px] w-[70px]" inner="pl-[3px]"><span>5</span></Combo></div>
            </Group>
            <Group title="Data Exclusion" w={71} className="mt-[7px] flex h-[47px] w-[362px] pl-[69px] pt-[13px]">
              <Button className="h-[23px] w-[87px]"><Fit w={60}>Exclusion ...</Fit></Button>
              <Button className="ml-[47px] h-[23px] w-[87px]"><Fit w={57}>Sampling ...</Fit></Button>
            </Group>
            <div className="mt-[9px] flex h-[21px] w-[362px] items-center">
              <Fit w={44} className="-ml-px">Columns:</Fit>
              <div className={"ml-[21px] flex h-[20px] w-[46px] p-px " + SUNKEN}>
                <div className="flex flex-1 items-center pl-[4px]"><Fit w={18}>100</Fit></div>
                <div className="flex w-[15px] flex-col">
                  <Button className="min-h-0 flex-1"><Tri d="M1.500 5.500h5L4 3z" /></Button>
                  <Button className="min-h-0 flex-1"><Tri d="M1.500 3h5L4 5.500z" /></Button>
                </div>
              </div>
              <Check className="ml-[34px] mt-[2px]" /><Fit w={76} className="ml-[4px] mt-[4px]">Show Std. Dev.</Fit>
              <Check className="ml-[34px] mt-[2px]" /><Fit w={56} className="ml-[4px] mt-[4px]">Show Mean</Fit>
            </div>
          </div>
          <Group title="Classification Statistics" w={109} className="ml-[24px] mt-[11px] h-[137px] w-[230px] pl-[4px] pt-[9px]">
            <div className={"flex h-[119px] w-[221px] p-px " + SUNKEN}>
              <div className="flex w-[202px] shrink-0 flex-col overflow-hidden">
                <div className="h-[101px] overflow-hidden pt-px">
                  {STATS.map(([l, w, v, vw, c]) => <div key={l} className="flex h-[17px] items-center pl-[5px]"><Fit w={w}>{l}</Fit><Fit w={vw} className={c}>{v}</Fit></div>)}
                </div>
                <div className="flex h-[16px] shrink-0 bg-[#e9e7e3]">
                  <Button className="w-[16px]"><Tri d="M6 0v8L2 4z" /></Button><Button className="w-[158px]" /><Button className="ml-auto w-[16px]"><Tri d="M2 0v8l4-4z" /></Button>
                </div>
              </div>
              <div className="flex flex-1 flex-col bg-[#d4d0c8]">
                <div className="flex h-[101px] flex-col bg-[#e9e7e3]">
                  <Button className="h-[16px]"><Tri d="M0 6h8L4 2z" /></Button><Button className="h-[50px]" /><Button className="mt-auto h-[16px]"><Tri d="M0 2h8L4 6z" /></Button>
                </div>
              </div>
            </div>
          </Group>
        </div>
        <div className="flex pl-[5px]">
          <div className="w-[502px] pt-[5px]">
            <div className={"h-[271px] w-[501px] p-px " + SUNKEN}><Histogram /></div>
            <div className="mt-[5px] flex h-[14px] items-center text-[#808080]">
              <Check fill="bg-[#d4d0c8]" /><Fit w={132} className="ml-[4px] [text-shadow:1px_1px_0_#fff]">Snap breaks to data values</Fit>
            </div>
          </div>
          <div className="ml-[8px] w-[105px] pt-[2px]">
            <div className="flex h-[24px] items-center"><Fit w={62} className="mt-px">Break Values</Fit><Button className="ml-auto h-[23px] w-[21px]">%</Button></div>
            <div className={"h-[211px] w-[105px] pl-[7px] pt-[2px] " + SUNKEN}>
              {[["825,515436", 58], ["2189,363722", 65], ["4918,558694", 65], ["8188,092513", 65], ["14117,808651", 71]].map(([t, w]) => <div key={t} className="flex h-[17px] items-center"><Fit w={w}>{t}</Fit></div>)}
            </div>
            <OkButton className="ml-[30px] mt-[7px] h-[24px] w-[75px]"><Fit w={15}>OK</Fit></OkButton>
            <Button className="ml-[30px] mt-[7px] h-[24px] w-[75px]"><Fit w={33}>Cancel</Fit></Button>
          </div>
        </div>
      </div>
    </div>
  );
}

const Mark = ({ className }) => <div className={"absolute border-3 border-[#f08436] " + className} />;
const Num = ({ className, children }) => <div className={"absolute font-['DejaVu_Sans',sans-serif] text-[18px] font-bold leading-[20px] text-[#f58235] " + className}>{children}</div>;

export default function App() {
  return (
    <div className="relative flex h-[979px] w-[1560px] flex-col overflow-hidden bg-[#d4d0c8] text-black">
      <TopBars />
      <div className="flex min-h-0 flex-1">
        <div className="flex pt-px"><Contents /></div>
        <div className="ml-[4px] flex min-w-0 flex-1 flex-col border-t-2 border-l-2 border-[#505050]">
          <div className="h-[19px] shrink-0 overflow-hidden"><HRuler /></div>
          <div className="flex min-h-0 flex-1"><div className="w-[19px] shrink-0"><VRuler /></div><MapCanvas /></div>
        </div>
      </div>
      <LayerProperties />
      <Mark className="left-[296px] top-[217px] h-[191px] w-[139px]" />
      <Mark className="left-[442px] top-[259px] h-[33px] w-[230px]" />
      <Mark className="left-[682px] top-[248px] h-[77px] w-[184px]" />
      <Num className="left-[448px] top-[228px]">2</Num>
      <Num className="left-[699px] top-[227px]">3</Num>
      <ClassificationDialog />
      <Mark className="left-[890px] top-[381px] h-[72px] w-[348px]" />
      <Num className="left-[1210px] top-[470px]">4</Num>
      <Num className="left-[32px] top-[280px] leading-[23px]"><Fit w={106}>1 Способы</Fit><br /><Fit w={133}>отображения</Fit></Num>
      <svg viewBox="0 0 1560 979" className="pointer-events-none absolute inset-0 h-[979px] w-[1560px]" fill="none" stroke="#f08436">
        <path d="M197 296.500H298" strokeWidth="2.600" />
        <path d="M866 279.500C975 280 1085 326 1122 364L1150 398" strokeWidth="3" />
        <path d="M1112 356L1150 398" strokeWidth="4" stroke="#ff7f27" />
      </svg>
    </div>
  );
}
